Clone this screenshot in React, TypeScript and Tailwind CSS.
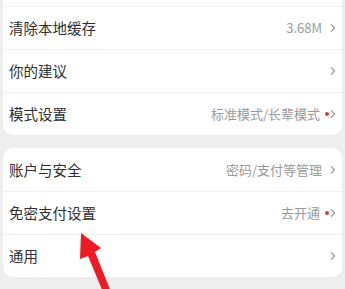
import React from 'react';

// 设置页列表（截图片段）

interface Row {
    title: string;
    value?: string;
    dot?: boolean;
}

const GROUP_ONE: Row[] = [
    { title: '清除本地缓存', value: '3.68M' },
    { title: '你的建议' },
    { title: '模式设置', value: '标准模式/长辈模式', dot: true },
];

const GROUP_TWO: Row[] = [
    { title: '账户与安全', value: '密码/支付等管理' },
    { title: '免密支付设置', value: '去开通', dot: true },
    { title: '通用' },
];

function Chevron() {
    return (
        <svg width="6" height="10" viewBox="0 0 6 10" className="shrink-0">
            <path d="M1.3 1.6 L4.6 5 L1.3 8.4" fill="none" stroke="#9b9b9b" strokeWidth="1.2" strokeLinecap="round" strokeLinejoin="round" />
        </svg>
    );
}

function SettingRow({ row, first }: { row: Row; first?: boolean }) {
    return (
        <div
            className={`h-[43px] flex items-center justify-between pl-[6px] pr-[6px] ${
                first ? '' : 'border-t border-[#efefef]'
            }`}
        >
            <span className="text-[14.5px] text-[#2f2f2f]">{row.title}</span>
            <div className="flex items-center">
                {row.value && <span className="text-[13px] text-[#9a9a9a]">{row.value}</span>}
                {row.dot ? (
                    <span className="ml-[5px] mr-[1px] w-[4px] h-[4px] rounded-full bg-[#e0393e]" />
                ) : (
                    <span className="w-[8px]" />
                )}
                <Chevron />
            </div>
        </div>
    );
}

export default function App() {
    return (
        <div
            className="relative w-[345px] h-[289px] overflow-hidden bg-[#eeeeee]"
            style={{ fontFamily: '"Noto Sans CJK SC", "Noto Sans", sans-serif' }}
        >
            {/* 第一组（上方被截断） */}
            <div className="mx-[3px] bg-white rounded-b-[10px]">
                <div className="h-[6px]" />
                {GROUP_ONE.map(row => (
                    <SettingRow key={row.title} row={row} />
                ))}
            </div>

            {/* 第二组 */}
            <div className="mt-[13px] mx-[3px] bg-white rounded-[10px]">
                {GROUP_TWO.map((row, i) => (
                    <SettingRow key={row.title} row={row} first={i === 0} />
                ))}
            </div>

            {/* 红色箭头标注 */}
            <svg className="absolute left-0 top-0" width="345" height="289" viewBox="0 0 345 289">
                <polygon points="81,233 101,248 95,252 111,292 103,292 88,256 80,259" fill="#ec1c24" />
            </svg>
        </div>
    );
}
